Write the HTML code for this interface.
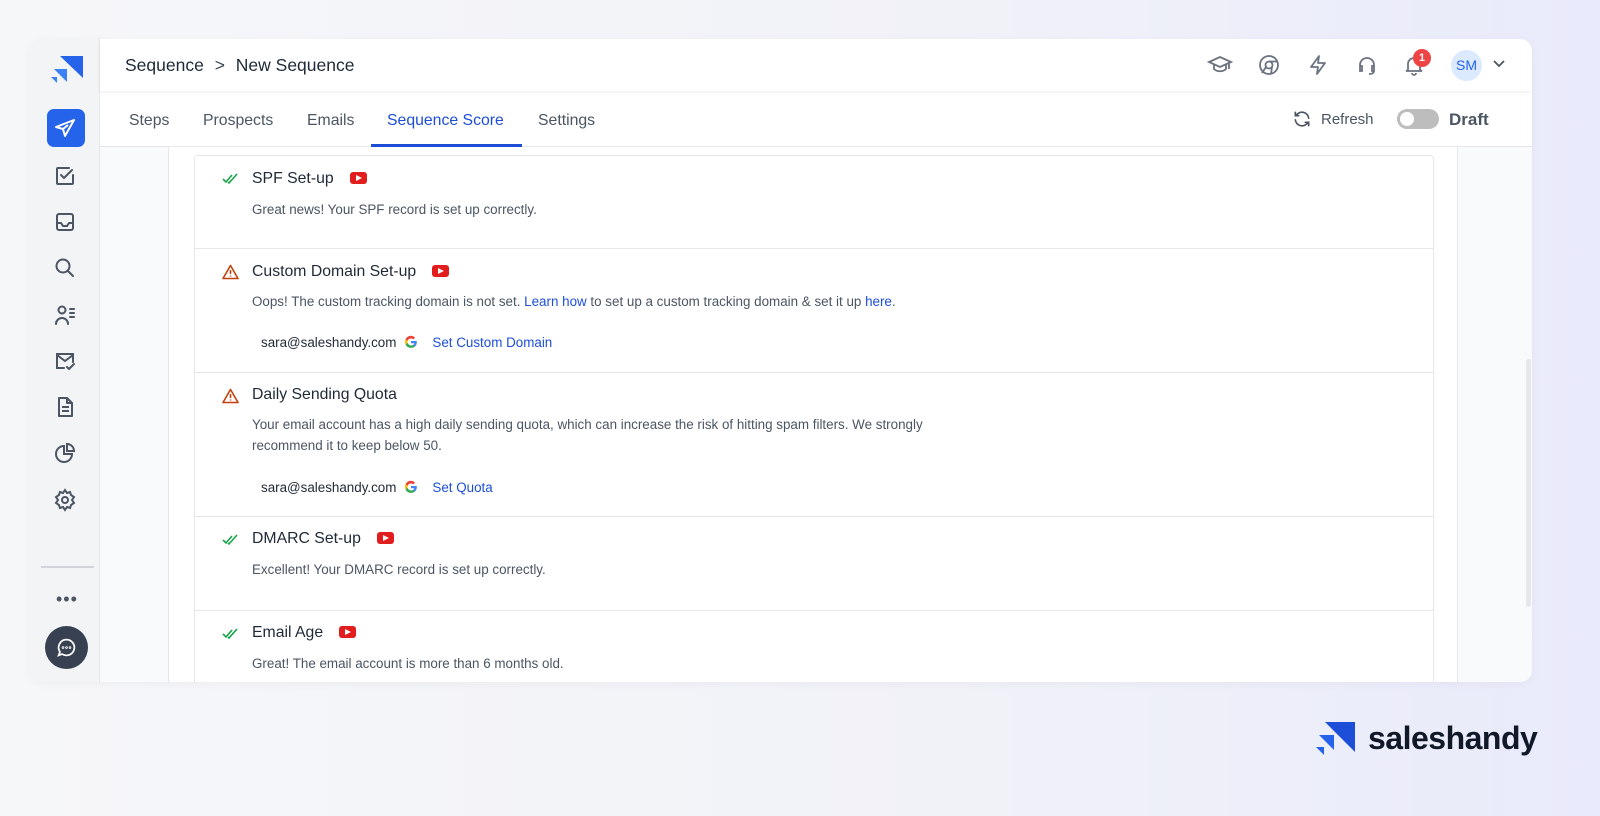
<!DOCTYPE html>
<html><head><meta charset="utf-8"><style>
*{box-sizing:border-box;margin:0;padding:0}
body{width:1600px;height:816px;overflow:hidden;font-family:"Liberation Sans",sans-serif;background:linear-gradient(90deg,#f6f7f9 0%,#f1f2f8 60%,#e9eafb 100%);position:relative}
.app{position:absolute;left:30px;top:39px;width:1502px;height:643px;background:#fff;border-radius:12px;overflow:hidden;box-shadow:0 2px 10px rgba(0,0,0,.04)}
.side{position:absolute;left:0;top:0;width:70px;height:643px;background:#f3f4f6;border-right:1px solid #e5e7eb}
.ic{position:absolute;left:23px;width:24px;height:24px}
.head{position:absolute;left:70px;top:0;right:0;height:52px;background:#fff;box-shadow:0 2px 4px rgba(0,0,0,.06);z-index:2}
.crumb{position:absolute;left:25px;top:16px;font-size:17.5px;color:#1f2937}
.tabs{position:absolute;left:70px;top:52px;right:0;height:56px;border-bottom:1px solid #e5e7eb;background:#fff}
.tab{position:absolute;top:21px;font-size:15.8px;color:#4b5563}
.content{position:absolute;left:70px;top:108px;right:0;bottom:0;background:#f9fafb}
.panel{position:absolute;left:68px;top:0;width:1290px;bottom:0;background:#fff;border-left:1px solid #e5e7eb;border-right:1px solid #e5e7eb}
.card{position:absolute;left:25px;top:8px;width:1240px;height:540px;border:1px solid #e5e7eb;border-radius:4px}
.row{position:absolute;left:0;right:0;border-bottom:1px solid #e5e7eb}
.t{position:absolute;left:57px;font-size:15.8px;color:#1f2937}
.d{position:absolute;left:57px;font-size:13.4px;color:#4b5563;line-height:21px}
.a{color:#1d4ed8}
.yt{display:inline-block;width:17px;height:12px;background:#e11d1d;border-radius:3px;position:relative;vertical-align:middle;margin-left:16px;top:-1px}
.yt:after{content:"";position:absolute;left:6px;top:3px;border-left:6px solid #fff;border-top:3px solid transparent;border-bottom:3px solid transparent}
.em{position:absolute;left:66px;font-size:13.4px;color:#1f2937}
.mk{position:absolute;left:27px}
.g{display:inline-block;vertical-align:middle;margin:0 14px 0 8px;position:relative;top:-1px}
</style></head><body>
<div class="app">
 <div class="side">
  <svg style="position:absolute;left:21px;top:16px" width="33" height="32" viewBox="0 0 33 32"><path d="M9 1h23v22z" fill="#2563eb"/><path d="M3 14h13v13z" fill="#3b82f6"/><path d="M0 22h6v6z" fill="#3b82f6"/></svg>
  <div style="position:absolute;left:17px;top:70px;width:38px;height:38px;background:#2563eb;border-radius:7px"></div>
  <svg class="ic" style="top:77px" viewBox="0 0 24 24" fill="none" stroke="#fff" stroke-width="2" stroke-linejoin="round"><path d="M21 4L3 11l7 2 2 7z M10 13l5-4"/></svg>
  <svg class="ic" style="top:125px" viewBox="0 0 24 24" fill="none" stroke="#4b5563" stroke-width="2" stroke-linecap="round"><path d="M20 11v8a1 1 0 0 1-1 1H5a1 1 0 0 1-1-1V5a1 1 0 0 1 1-1h11M8 11l3 3 8-8"/></svg>
  <svg class="ic" style="top:171px" viewBox="0 0 24 24" fill="none" stroke="#4b5563" stroke-width="2"><rect x="4" y="4" width="16" height="16" rx="2"/><path d="M4 13h4l2 3h4l2-3h4"/></svg>
  <svg class="ic" style="top:217px" viewBox="0 0 24 24" fill="none" stroke="#4b5563" stroke-width="2" stroke-linecap="round"><circle cx="10" cy="10" r="6.5"/><path d="M15 15l5 5"/></svg>
  <svg class="ic" style="top:264px" viewBox="0 0 24 24" fill="none" stroke="#4b5563" stroke-width="2" stroke-linecap="round"><circle cx="9" cy="7" r="3.5"/><path d="M3 21a6 6 0 0 1 12 0M17 6h4M17 10h4M17 14h4"/></svg>
  <svg class="ic" style="top:310px" viewBox="0 0 24 24" fill="none" stroke="#4b5563" stroke-width="2" stroke-linecap="round"><path d="M11 19H4V5h16v8M4 6l8 6 8-6M14 18l2 2 5-5"/></svg>
  <svg class="ic" style="top:356px" viewBox="0 0 24 24" fill="none" stroke="#4b5563" stroke-width="2" stroke-linejoin="round"><path d="M6 3h8l5 5v13H6zM14 3v5h5M9 12h7M9 16h7"/></svg>
  <svg class="ic" style="top:402px" viewBox="0 0 24 24" fill="none" stroke="#4b5563" stroke-width="2"><path d="M11 5a8 8 0 1 0 8 8h-8z"/><path d="M14 3a7 7 0 0 1 7 7h-7z"/></svg>
  <svg class="ic" style="top:449px" viewBox="0 0 24 24" fill="none" stroke="#4b5563" stroke-width="2"><circle cx="12" cy="12" r="3"/><path d="M12 2l2 3 3-1 1 3 3 2-2 3 2 3-3 2-1 3-3-1-2 3-2-3-3 1-1-3-3-2 2-3-2-3 3-2 1-3 3 1z"/></svg>
  <div style="position:absolute;left:11px;top:527px;width:53px;height:2px;background:#d1d5db"></div>
  <div style="position:absolute;left:26px;top:557px;font-size:18px;color:#4b5563;letter-spacing:1px;line-height:6px">•••</div>
  <div style="position:absolute;left:15px;top:587px;width:43px;height:43px;border-radius:50%;background:#374151"></div>
  <svg style="position:absolute;left:26px;top:598px" width="21" height="21" viewBox="0 0 24 24" fill="none" stroke="#fff" stroke-width="2"><path d="M12 3a9 9 0 1 1-5 16.5L3 21l1.5-4A9 9 0 0 1 12 3z"/><circle cx="8" cy="12" r=".5"/><circle cx="12" cy="12" r=".5"/><circle cx="16" cy="12" r=".5"/></svg>
 </div>
 <div class="head">
  <div class="crumb">Sequence <span style="color:#374151;margin:0 6px">&gt;</span> New Sequence</div>
  <svg style="position:absolute;left:1107px;top:14px" width="26" height="24" viewBox="0 0 26 24" fill="none" stroke="#6b7280" stroke-width="1.8"><path d="M2 9l11-5 11 5-11 5zM7 11v5c3 3 9 3 12 0v-5M22 10v6"/></svg>
  <svg style="position:absolute;left:1157px;top:14px" width="24" height="24" viewBox="0 0 24 24" fill="none" stroke="#6b7280" stroke-width="1.8"><circle cx="12" cy="12" r="9"/><circle cx="12" cy="12" r="3.5"/><path d="M12 8.5h8M9 14l-4 6M15 14l-1 7"/></svg>
  <svg style="position:absolute;left:1206px;top:14px" width="24" height="24" viewBox="0 0 24 24" fill="none" stroke="#6b7280" stroke-width="1.8" stroke-linejoin="round"><path d="M13 3L5 14h7l-1 7 8-11h-7z"/></svg>
  <svg style="position:absolute;left:1255px;top:14px" width="24" height="24" viewBox="0 0 24 24" fill="none" stroke="#6b7280" stroke-width="1.8"><path d="M5 15v-3a7 7 0 0 1 14 0v3M5 13h2v5H5zM17 13h2v5h-2zM19 18c0 2-2 3-5 3"/></svg>
  <svg style="position:absolute;left:1302px;top:14px" width="24" height="24" viewBox="0 0 24 24" fill="none" stroke="#6b7280" stroke-width="1.8"><path d="M6 17V11a6 6 0 0 1 12 0v6l2 1H4zM10 20a2 2 0 0 0 4 0"/></svg>
  <div style="position:absolute;left:1313px;top:10px;width:18px;height:18px;border-radius:50%;background:#ef4444;color:#fff;font-size:11px;font-weight:bold;text-align:center;line-height:18px">1</div>
  <div style="position:absolute;left:1351px;top:11px;width:31px;height:31px;border-radius:50%;background:#dbeafe;color:#2563eb;font-size:14px;text-align:center;line-height:31px">SM</div>
  <svg style="position:absolute;left:1392px;top:19px" width="14" height="12" viewBox="0 0 14 12" fill="none" stroke="#4b5563" stroke-width="1.8"><path d="M2 3l5 5 5-5"/></svg>
 </div>
 <div class="tabs">
  <div class="tab" style="left:29px">Steps</div>
  <div class="tab" style="left:103px">Prospects</div>
  <div class="tab" style="left:207px">Emails</div>
  <div class="tab" style="left:287px;color:#1d4ed8">Sequence Score</div>
  <div style="position:absolute;left:271px;top:53px;width:151px;height:3px;background:#1d4ed8"></div>
  <div class="tab" style="left:438px">Settings</div>
  <svg style="position:absolute;left:1192px;top:18px" width="20" height="20" viewBox="0 0 24 24" fill="none" stroke="#4b5563" stroke-width="2" stroke-linecap="round"><path d="M20 11a8 8 0 0 0-15-3M4 4v4h4M4 13a8 8 0 0 0 15 3M20 20v-4h-4"/></svg>
  <div class="tab" style="left:1221px;top:20px;font-size:15px">Refresh</div>
  <div style="position:absolute;left:1297px;top:18px;width:42px;height:20px;border-radius:10px;background:#bdbdbd"></div>
  <div style="position:absolute;left:1300px;top:21px;width:14px;height:14px;border-radius:50%;background:#fff"></div>
  <div class="tab" style="left:1349px;top:19px;font-size:17px;font-weight:bold;color:#4b5563">Draft</div>
 </div>
 <div class="content">
  <div class="panel">
   <div class="card">
    <div class="row" style="top:0;height:93px">
     <svg class="mk" style="top:17px" width="18" height="12" viewBox="0 0 18 12" fill="none" stroke="#16a34a" stroke-width="1.6"><path d="M1 6l3 3 6-7M6 9l1 1 8-9"/></svg>
     <div class="t" style="top:14px">SPF Set-up<span class="yt"></span></div>
     <div class="d" style="top:43px">Great news! Your SPF record is set up correctly.</div>
    </div>
    <div class="row" style="top:93px;height:124px">
     <svg class="mk" style="top:15px" width="17" height="16" viewBox="0 0 17 16" fill="none" stroke="#c2410c" stroke-width="1.6" stroke-linejoin="round"><path d="M8.5 1.5L16 14.5H1z M8.5 6v4M8.5 11.5v1"/></svg>
     <div class="t" style="top:14px">Custom Domain Set-up<span class="yt"></span></div>
     <div class="d" style="top:42px">Oops! The custom tracking domain is not set. <span class="a">Learn how</span> to set up a custom tracking domain &amp; set it up <span class="a">here</span>.</div>
     <div class="em" style="top:86px">sara@saleshandy.com<svg class="g" width="14" height="14" viewBox="0 0 24 24"><path d="M22 12.2c0-.7-.1-1.4-.2-2H12v3.9h5.6a4.8 4.8 0 0 1-2.1 3.1v2.6h3.4c2-1.8 3.1-4.5 3.1-7.6z" fill="#4285f4"/><path d="M12 22c2.8 0 5.2-.9 6.9-2.5l-3.4-2.6c-.9.6-2.1 1-3.5 1-2.7 0-5-1.8-5.8-4.3H2.7v2.7A10 10 0 0 0 12 22z" fill="#34a853"/><path d="M6.2 13.6a6 6 0 0 1 0-3.8V7.1H2.7a10 10 0 0 0 0 9z" fill="#fbbc05"/><path d="M12 5.9c1.5 0 2.9.5 4 1.5l3-3A10 10 0 0 0 2.7 7.1l3.5 2.7C7 7.7 9.3 5.9 12 5.9z" fill="#ea4335"/></svg><span class="a">Set Custom Domain</span></div>
    </div>
    <div class="row" style="top:217px;height:144px">
     <svg class="mk" style="top:15px" width="17" height="16" viewBox="0 0 17 16" fill="none" stroke="#c2410c" stroke-width="1.6" stroke-linejoin="round"><path d="M8.5 1.5L16 14.5H1z M8.5 6v4M8.5 11.5v1"/></svg>
     <div class="t" style="top:13px">Daily Sending Quota</div>
     <div class="d" style="top:41px">Your email account has a high daily sending quota, which can increase the risk of hitting spam filters. We strongly<br>recommend it to keep below 50.</div>
     <div class="em" style="top:107px">sara@saleshandy.com<svg class="g" width="14" height="14" viewBox="0 0 24 24"><path d="M22 12.2c0-.7-.1-1.4-.2-2H12v3.9h5.6a4.8 4.8 0 0 1-2.1 3.1v2.6h3.4c2-1.8 3.1-4.5 3.1-7.6z" fill="#4285f4"/><path d="M12 22c2.8 0 5.2-.9 6.9-2.5l-3.4-2.6c-.9.6-2.1 1-3.5 1-2.7 0-5-1.8-5.8-4.300H2.7v2.7A10 10 0 0 0 12 22z" fill="#34a853"/><path d="M6.2 13.6a6 6 0 0 1 0-3.8V7.1H2.7a10 10 0 0 0 0 9z" fill="#fbbc05"/><path d="M12 5.9c1.5 0 2.9.5 4 1.5l3-3A10 10 0 0 0 2.7 7.1l3.5 2.7C7 7.7 9.3 5.9 12 5.9z" fill="#ea4335"/></svg><span class="a">Set Quota</span></div>
    </div>
    <div class="row" style="top:361px;height:94px">
     <svg class="mk" style="top:17px" width="18" height="12" viewBox="0 0 18 12" fill="none" stroke="#16a34a" stroke-width="1.6"><path d="M1 6l3 3 6-7M6 9l1 1 8-9"/></svg>
     <div class="t" style="top:13px">DMARC Set-up<span class="yt"></span></div>
     <div class="d" style="top:42px">Excellent! Your DMARC record is set up correctly.</div>
    </div>
    <div class="row" style="top:455px;height:94px;border-bottom:none">
     <svg class="mk" style="top:17px" width="18" height="12" viewBox="0 0 18 12" fill="none" stroke="#16a34a" stroke-width="1.6"><path d="M1 6l3 3 6-7M6 9l1 1 8-9"/></svg>
     <div class="t" style="top:13px">Email Age<span class="yt"></span></div>
     <div class="d" style="top:42px">Great! The email account is more than 6 months old.</div>
    </div>
   </div>
  </div>
  <div style="position:absolute;left:1426px;top:212px;width:5px;height:248px;border-radius:3px;background:#e5e7eb"></div>
 </div>
</div>
<svg style="position:absolute;left:1316px;top:721px" width="40" height="38" viewBox="0 0 40 38"><path d="M9 1h30v30z" fill="#1d4ed8"/><path d="M3 14h15v15z" fill="#2563eb"/><path d="M0 26h8v8z" fill="#2563eb"/></svg>
<div style="position:absolute;left:1368px;top:720px;font-size:32px;font-weight:bold;color:#111827;letter-spacing:-0.5px">saleshandy</div>
</body></html>
